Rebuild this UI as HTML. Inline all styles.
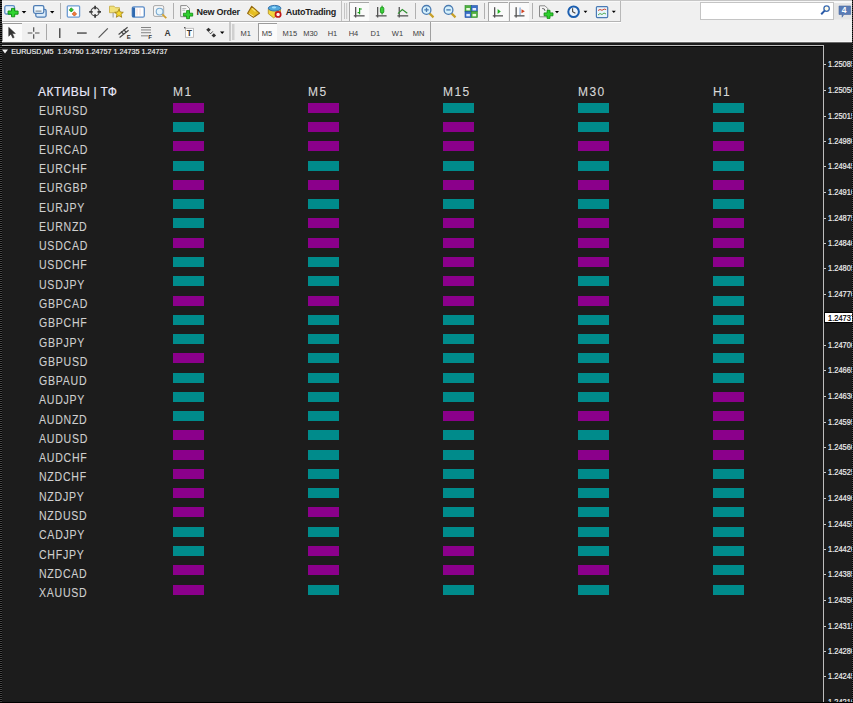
<!DOCTYPE html>
<html><head><meta charset="utf-8"><style>
*{margin:0;padding:0;box-sizing:border-box}
html,body{width:853px;height:703px;overflow:hidden;background:#1c1c1c;font-family:"Liberation Sans",sans-serif}
.abs{position:absolute}
#lstripe{position:absolute;left:0;top:0;width:2px;height:703px;background:repeating-linear-gradient(#000 0 1px,#454545 1px 2px)}
#rstripe{position:absolute;left:852px;top:0;width:1px;height:703px;background:repeating-linear-gradient(#000 0 1px,#454545 1px 2px)}
#tb{position:absolute;left:2px;top:0;width:850px;height:42px;background:#f0f0f0}
#tb1line{position:absolute;left:2px;top:0;width:850px;height:1px;background:#d4d4d4}
#tbsep{position:absolute;left:2px;top:21px;width:850px;height:1px;background:#a8a8a8}
#tbsep2{position:absolute;left:2px;top:22px;width:850px;height:1px;background:#fff}
#frameH{position:absolute;left:2px;top:45px;width:822px;height:1px;background:#bdbdbd}
#frameB{position:absolute;left:2px;top:46px;width:821px;height:1px;background:#000}
#frameV{position:absolute;left:823px;top:45px;width:1px;height:657px;background:#bdbdbd}
#bottom{position:absolute;left:0;top:702px;width:853px;height:1px;background:#000}
.title{position:absolute;left:11.2px;top:46.6px;font-size:7.2px;color:#f2f2f2;white-space:pre;letter-spacing:0;-webkit-text-stroke:0.15px #f2f2f2}
.tri{position:absolute;left:2.5px;top:50px;width:0;height:0;border-left:2.5px solid transparent;border-right:2.5px solid transparent;border-top:3.4px solid #f0f0f0}
.nm{position:absolute;left:39px;font-size:12px;letter-spacing:0.85px;transform:scaleX(0.88);transform-origin:0 0;color:#cfcfcf;line-height:14px;-webkit-text-stroke:0.1px #cfcfcf}
.th{position:absolute;top:85px;font-size:12px;letter-spacing:1.4px;color:#d8d8d8;line-height:14px;-webkit-text-stroke:0.1px #d8d8d8}
.hdr{position:absolute;left:38px;top:85.3px;font-size:12px;letter-spacing:0.45px;word-spacing:-0.5px;transform:scaleX(1);transform-origin:0 0;color:#e8e8fa;line-height:14px;white-space:pre;-webkit-text-stroke:0.15px #e8e8fa}
.bar{position:absolute;width:31px;height:10px}
.m{background:#8b008b}
.t{background:#008b8b}
.tk{position:absolute;left:824px;width:2px;height:1px;background:#c8c8c8}
.pl{position:absolute;left:827.6px;font-size:8.5px;color:#ececec;line-height:10px;white-space:nowrap;-webkit-text-stroke:0.2px #ececec;transform:scaleX(0.88);transform-origin:0 0}
.cur{position:absolute;left:824px;top:312px;width:29px;height:11px;background:#fff;border:1px solid #000}
.curt{position:absolute;left:827.6px;top:312.7px;font-size:8.5px;color:#000;line-height:10px;white-space:nowrap;-webkit-text-stroke:0.2px #000;transform:scaleX(0.88);transform-origin:0 0}
</style></head><body>
<svg class="abs" style="left:0;top:0" width="853" height="44" viewBox="0 0 853 44" font-family="Liberation Sans, sans-serif">
<rect x="2" y="0" width="850" height="42" fill="#f0f0f0"/>
<rect x="2" y="0" width="850" height="1" fill="#c6c6c6"/>
<rect x="2" y="1" width="850" height="1" fill="#f8f8f8"/>
<rect x="2" y="21" width="619" height="1" fill="#b4b4b4"/>
<rect x="2" y="22" width="619" height="1" fill="#ffffff"/>
<rect x="2" y="41" width="850" height="1" fill="#f8f8f8"/>
<rect x="2" y="42" width="850" height="1" fill="#6a6a6a"/>
<!-- toolbar1 right end -->
<rect x="620" y="1" width="1" height="20" fill="#b8b8b8"/>
<!-- separators row1 -->
<rect x="60" y="3" width="1" height="16" fill="#b0b0b0"/>
<rect x="173" y="3" width="1" height="16" fill="#b0b0b0"/>
<rect x="341" y="1" width="1" height="20" fill="#c0c0c0"/>
<rect x="344" y="3" width="1" height="16" fill="#c4c4c4"/><rect x="346.2" y="3" width="1" height="16" fill="#c4c4c4"/>
<rect x="415" y="3" width="1" height="16" fill="#b0b0b0"/>
<rect x="484" y="3" width="1" height="16" fill="#b0b0b0"/>
<rect x="532" y="3" width="1" height="16" fill="#b0b0b0"/>
<!-- pressed buttons row1 -->
<g fill="#fafafa" stroke="none"><rect x="349" y="2" width="20" height="19"/><rect x="488" y="2" width="20" height="19"/><rect x="509" y="2" width="20" height="19"/></g>
<g fill="#a8a8a8"><rect x="349" y="2" width="20" height="1"/><rect x="349" y="2" width="1" height="19"/>
<rect x="488" y="2" width="20" height="1"/><rect x="488" y="2" width="1" height="19"/>
<rect x="509" y="2" width="20" height="1"/><rect x="509" y="2" width="1" height="19"/></g>

<!-- new chart -->
<rect x="4.8" y="5.7" width="9.7" height="8.3" rx="1.5" fill="#e4f2fc" stroke="#5d8cc4" stroke-width="1.3"/>
<path d="M11.5 8.4h3.2v2.6h3.4v3.2h-3.4v2.6h-3.2v-2.6h-3.4v-3.2h3.4z" fill="#30d430" stroke="#0a8a0a" stroke-width="0.9"/>
<path d="M21.7 11h4.6l-2.3 2.4z" fill="#000"/>
<!-- profiles -->
<rect x="35.8" y="9.3" width="10.3" height="7.8" rx="1.5" fill="#dcecfa" stroke="#4d7cb4" stroke-width="1.3"/>
<rect x="33.6" y="5.6" width="10.2" height="7.7" rx="1.5" fill="#eef8ff" stroke="#4d7cb4" stroke-width="1.3"/>
<rect x="35.5" y="10.6" width="6" height="1" fill="#6a7a8a"/>
<path d="M50 11h4.4l-2.2 2.4z" fill="#000"/>
<!-- market watch -->
<rect x="67.3" y="5.8" width="12.3" height="11.3" rx="1" fill="#fbfdff" stroke="#6c9bd2" stroke-width="1.3"/>
<path d="M71.3 7.8l2.1 2.1-2.1 2.1-2.1-2.1z" fill="#2ec02e" stroke="#0c8c0c" stroke-width="0.7"/>
<path d="M74.4 11.7l2.2 2.2-2.2 2.2-2.2-2.2z" fill="#f07a3a" stroke="#c04a10" stroke-width="0.7"/>
<!-- data window -->
<circle cx="95.1" cy="11.8" r="4.1" fill="none" stroke="#4a4a4a" stroke-width="1.2"/>
<g stroke="#3c3c3c" stroke-linecap="butt"><path d="M95.1 5.8v3.5M95.1 14.3v3.5M89.2 11.8h3.5M97.5 11.8h3.5" stroke-width="1.8"/></g>
<!-- navigator -->
<path d="M109.5 6.2h4.5l1.5 1.5h4v5h-10z" fill="#f2e27a" stroke="#c8b04a" stroke-width="0.9"/>
<rect x="112.6" y="12.7" width="1" height="4.8" fill="#9a9a9a"/>
<path d="M119 9.2l1.3 2.8 3 .3-2.3 2 .7 3-2.7-1.6-2.7 1.6.7-3-2.3-2 3-.3z" fill="#f5d830" stroke="#9a7a10" stroke-width="0.8"/>
<!-- terminal -->
<rect x="132.3" y="6.8" width="12" height="10.4" rx="1.5" fill="#fff" stroke="#5a8ac6" stroke-width="1.3"/>
<rect x="132.3" y="7.5" width="2.8" height="9.6" fill="#2f69b0"/>
<path d="M137 8.5v7M140 8.5v7" stroke="#e8c0c0" stroke-width="0.6"/>
<!-- tester -->
<rect x="153.5" y="5.6" width="10.2" height="10.8" rx="1.5" fill="#f6f6f6" stroke="#a8a8a8" stroke-width="1"/>
<circle cx="159.6" cy="11.6" r="3.4" fill="#e4f4fc" stroke="#7aaad0" stroke-width="1.1"/>
<path d="M162.3 14.4l4 3.8" stroke="#d0a030" stroke-width="1.8"/>
<!-- new order -->
<path d="M180.7 5.6h6l2.8 2.8v8.3h-8.8z" fill="#f8f8f8" stroke="#8a8a8a" stroke-width="1"/>
<path d="M186.6 10.6h2.9v2.6h3.2v2.9h-3.2v2.6h-2.9v-2.6h-3.2v-2.9h3.2z" fill="#30d030" stroke="#0a8a0a" stroke-width="0.8"/>
<path d="M182.3 8.5h4M182.3 10.2h3" stroke="#9a9a9a" stroke-width="0.7"/>
<text x="196.6" y="14.6" font-size="9" font-weight="bold" fill="#1e1e1e" letter-spacing="-0.25">New Order</text>
<!-- metaeditor -->
<path d="M251.7 6.3l7.8 6.9-6.1 4.2-5.8-4z" fill="#e6be22" stroke="#946a12" stroke-width="1.1" stroke-linejoin="round"/>
<path d="M249.3 13.6l4.3 2.6" stroke="#fbe49a" stroke-width="1"/>
<path d="M252 8.5l3.5 3" stroke="#f6e070" stroke-width="1.2"/>
<!-- autotrading -->
<path d="M268.3 9.3h12.2v4.6l-7 3.9-5.2-4.1z" fill="#f2d63c" stroke="#b08a20" stroke-width="0.8"/>
<ellipse cx="274.6" cy="8.2" rx="6.3" ry="2.8" fill="#52a8dc" stroke="#2a6aa8" stroke-width="0.9"/>
<ellipse cx="274" cy="7.6" rx="2.2" ry="1" fill="#9adcff"/>
<circle cx="278.1" cy="14.4" r="2.6" fill="#fff2ee" stroke="#c01818" stroke-width="1.7"/>
<text x="285.8" y="14.6" font-size="9" font-weight="bold" fill="#1e1e1e" letter-spacing="-0.25">AutoTrading</text>
<!-- bar chart -->
<g fill="#555"><rect x="355" y="7" width="1.3" height="10.5"/><rect x="353.8" y="15.2" width="10.8" height="1.3"/></g>
<path d="M359.6 14.2v-6.2M357.6 12.6h2M359.6 9h2.2" stroke="#20a020" stroke-width="1.2" fill="none"/>
<!-- candle -->
<g fill="#555"><rect x="377" y="7" width="1.3" height="10.5"/><rect x="375.8" y="15.2" width="10.8" height="1.3"/></g>
<path d="M382.1 5.6v9" stroke="#0a8a0a" stroke-width="0.9"/><rect x="380.4" y="7.2" width="3.4" height="5.8" rx="1.2" fill="#3ad03a" stroke="#0a8a0a" stroke-width="0.8"/>
<!-- line chart -->
<g fill="#555"><rect x="398.6" y="7" width="1.3" height="10.5"/><rect x="397.4" y="15.2" width="10.8" height="1.3"/></g>
<path d="M398 13.6l4.3-4 5 3.6" stroke="#309030" stroke-width="1.2" fill="none"/>
<!-- zoom in/out -->
<path d="M429.5 13.4l4 4" stroke="#c8a028" stroke-width="2.2"/>
<circle cx="426.5" cy="9.9" r="4.4" fill="#d4f0fc" stroke="#4a7ab0" stroke-width="1.3"/>
<path d="M424.3 9.9h4.4M426.5 7.7v4.4" stroke="#4a7ab0" stroke-width="1.3"/>
<path d="M451.5 13.4l4 4" stroke="#c8a028" stroke-width="2.2"/>
<circle cx="448.5" cy="9.9" r="4.4" fill="#d4f0fc" stroke="#4a7ab0" stroke-width="1.3"/>
<path d="M446.3 9.9h4.4" stroke="#4a7ab0" stroke-width="1.3"/>
<!-- tile -->
<rect x="465" y="5.6" width="6.2" height="5.9" fill="#50b040" stroke="#2a8a2a" stroke-width="0.6"/>
<rect x="471.2" y="5.6" width="6.2" height="5.9" fill="#3a70c8" stroke="#1a4aa0" stroke-width="0.6"/>
<rect x="465" y="11.5" width="6.2" height="6" fill="#3a70c8" stroke="#1a4aa0" stroke-width="0.6"/>
<rect x="471.2" y="11.5" width="6.2" height="6" fill="#50b040" stroke="#2a8a2a" stroke-width="0.6"/>
<g fill="#e8f8e0"><rect x="466.3" y="8" width="3.6" height="2.4"/><rect x="472.5" y="13.9" width="3.6" height="2.4"/></g>
<g fill="#e0ecff"><rect x="472.5" y="8" width="3.6" height="2.4"/><rect x="466.3" y="13.9" width="3.6" height="2.4"/></g>
<!-- auto scroll -->
<g fill="#555"><rect x="494" y="7.2" width="1.3" height="10.4"/><rect x="492.8" y="15.2" width="10.2" height="1.3"/></g>
<path d="M497.6 9l3.2 2.5-3.2 2.5z" fill="#22b022"/>
<!-- chart shift -->
<g fill="#555"><rect x="515.5" y="7.2" width="1.3" height="10.4"/><rect x="514.3" y="15.2" width="10.2" height="1.3"/></g>
<rect x="519.6" y="7.5" width="0.9" height="7.6" fill="#5a8ac6"/>
<path d="M521.5 9.2l3.4 2-3.4 2z" fill="#d04020"/>
<!-- indicators -->
<path d="M539.5 5.8h5.5l2.8 2.8v8.2h-8.3z" fill="#f4f4f4" stroke="#8a8a8a" stroke-width="1"/>
<path d="M542.2 8.5a2.5 2.5 0 0 1 2.8 2.5" stroke="#555" stroke-width="0.9" fill="none"/>
<path d="M547.1 10.3h2.9v2.6h3v2.9h-3v2.6h-2.9v-2.6h-3v-2.9h3z" fill="#30d030" stroke="#0a8a0a" stroke-width="0.8"/>
<path d="M555 11h4l-2 2.3z" fill="#000"/>
<!-- clock -->
<circle cx="573.6" cy="11.7" r="5.3" fill="#eef4fa" stroke="#1c5fb0" stroke-width="2"/>
<path d="M572.6 8.2v3.5l2.8 1.5" stroke="#444" stroke-width="1.1" fill="none"/>
<path d="M583.6 10.8h3.8l-1.9 2.3z" fill="#000"/>
<!-- templates -->
<rect x="596.4" y="6.6" width="11.3" height="11" rx="1" fill="#e8f4fc" stroke="#4a7ab4" stroke-width="1.2"/>
<path d="M598 10.5l2-1 2 .8 2.2-1.2 2 .5" stroke="#d04a30" stroke-width="1" fill="none"/>
<path d="M598 15l2-1.5 2 1 2-1.5 2 1" stroke="#40a040" stroke-width="0.9" fill="none"/>
<path d="M611.8 10.8h4l-2 2.3z" fill="#000"/>
<!-- search -->
<rect x="700.5" y="2.5" width="133" height="17" fill="#fff" stroke="#c4c4c4" stroke-width="1"/>
<circle cx="826.6" cy="8.6" r="2.7" fill="#fffbe8" stroke="#3a6ab0" stroke-width="1.3"/>
<path d="M824.7 10.6l-3.5 3.6" stroke="#2a5aa8" stroke-width="2"/>
<rect x="834" y="2.5" width="18" height="17" fill="#e6e6e6"/>
<rect x="834" y="2" width="18" height="1" fill="#f8f8f8"/>
<path d="M839 6h11.6v8.5h-6.8l-1.7 2.7v-2.7h-3.1z" fill="#5a7cb6" stroke="#4a68a0" stroke-width="0.6"/>
<text x="841.8" y="13.4" font-size="8.5" font-weight="bold" fill="#fff">4</text>

<!-- ======== row2 ======== -->
<rect x="2" y="23" width="20" height="18" fill="#fbfbfb"/>
<rect x="2" y="23" width="20" height="1" fill="#9c9c9c"/>
<rect x="2" y="23" width="1" height="18" fill="#9c9c9c"/>
<rect x="46" y="24" width="1" height="16" fill="#a8a8a8"/>
<!-- cursor -->
<path d="M8.7 27.3v9l2.2-2.1 1.9 3.9 1.4-.7-1.8-3.8 3 -.1z" fill="#333" stroke="#333" stroke-width="0.5"/>
<!-- crosshair -->
<g stroke="#505050" stroke-width="1.2"><path d="M33.7 27.3v4.5M33.7 34.2v4.5M27.7 33h4.7M35 33h4.5"/></g>
<!-- vline -->
<rect x="59" y="28.2" width="1.5" height="9.8" fill="#555"/>
<!-- hline -->
<rect x="77" y="32.3" width="9.7" height="1.5" fill="#555"/>
<!-- trendline -->
<path d="M98.6 37.6l9.2-9.2" stroke="#555" stroke-width="1.2"/>
<!-- channel -->
<g stroke="#444" stroke-width="1.1" fill="none"><path d="M118.6 34.5l9-7.2M119.6 37.5l9-7.2M121 31.5l3 3M123.5 29.5l3 3"/></g>
<text x="126.8" y="39.4" font-size="6" font-weight="bold" fill="#333">E</text>
<!-- fibo -->
<g fill="#777"><rect x="141" y="27" width="10" height="0.9"/><rect x="141" y="29.5" width="10" height="0.9"/><rect x="141" y="32.3" width="10" height="0.9"/><rect x="141" y="35.4" width="7" height="0.9"/></g>
<text x="148.3" y="39.2" font-size="6" font-weight="bold" fill="#333">F</text>
<!-- text A -->
<text x="164.6" y="36.3" font-size="8.5" font-weight="bold" fill="#3a3a3a">A</text>
<!-- text label T -->
<rect x="185.5" y="28.3" width="8" height="9" fill="#fff" stroke="#b0b0b0" stroke-width="0.8"/>
<circle cx="184.8" cy="27.8" r="0.8" fill="#333"/>
<text x="186.8" y="36.3" font-size="8.5" font-weight="bold" fill="#333">T</text>
<!-- arrows -->
<path d="M208.5 27.7l2.3 2.1-2.3 2.1-2.3-2.1zM213.8 33.2l2.3 2.2-2.3 2.2-2.3-2.2z" fill="#333"/>
<path d="M209.2 32.4l1.4 1.4 2.2-2.4" stroke="#333" stroke-width="0.9" fill="none"/>
<path d="M220 31.6h4.4l-2.2 2.4z" fill="#000"/>
<!-- end toolbar2a -->
<rect x="229.5" y="22" width="1" height="19" fill="#a0a0a0"/>
<rect x="232" y="24" width="2.5" height="16" fill="#d0d0d0"/>
<!-- timeframes -->
<rect x="258" y="23" width="19" height="18" fill="#fbfbfb"/>
<rect x="258" y="23" width="19" height="1" fill="#9c9c9c"/>
<rect x="258" y="23" width="1" height="18" fill="#9c9c9c"/>
<g font-size="7.5" fill="#3c3c3c">
<text x="240.5" y="35.8">M1</text>
<text x="261.8" y="35.8">M5</text>
<text x="282.5" y="35.8">M15</text>
<text x="303.2" y="35.8">M30</text>
<text x="327.7" y="35.8">H1</text>
<text x="348.7" y="35.8">H4</text>
<text x="370.5" y="35.8">D1</text>
<text x="391.8" y="35.8">W1</text>
<text x="412.8" y="35.8">MN</text>
</g>
<rect x="430" y="22" width="1" height="19" fill="#a0a0a0"/>
</svg>

<div id="frameH"></div><div id="frameB"></div><div id="frameV"></div>
<svg class="abs" style="left:0;top:0" width="12" height="60"><path d="M2 49.6h6l-3 3.9z" fill="#f2f2f2"/></svg><div class="title">EURUSD,M5  1.24750 1.24757 1.24735 1.24737</div>
<div class="hdr">АКТИВЫ | ТФ</div>
<div class="nm" style="top:104.30px">EURUSD</div><div class="bar m" style="left:173px;top:102.80px"></div><div class="bar m" style="left:308px;top:102.80px"></div><div class="bar t" style="left:443px;top:102.80px"></div><div class="bar t" style="left:578px;top:102.80px"></div><div class="bar t" style="left:713px;top:102.80px"></div><div class="nm" style="top:123.57px">EURAUD</div><div class="bar t" style="left:173px;top:122.07px"></div><div class="bar m" style="left:308px;top:122.07px"></div><div class="bar m" style="left:443px;top:122.07px"></div><div class="bar t" style="left:578px;top:122.07px"></div><div class="bar t" style="left:713px;top:122.07px"></div><div class="nm" style="top:142.84px">EURCAD</div><div class="bar m" style="left:173px;top:141.34px"></div><div class="bar m" style="left:308px;top:141.34px"></div><div class="bar m" style="left:443px;top:141.34px"></div><div class="bar m" style="left:578px;top:141.34px"></div><div class="bar m" style="left:713px;top:141.34px"></div><div class="nm" style="top:162.11px">EURCHF</div><div class="bar t" style="left:173px;top:160.61px"></div><div class="bar t" style="left:308px;top:160.61px"></div><div class="bar t" style="left:443px;top:160.61px"></div><div class="bar t" style="left:578px;top:160.61px"></div><div class="bar t" style="left:713px;top:160.61px"></div><div class="nm" style="top:181.38px">EURGBP</div><div class="bar m" style="left:173px;top:179.88px"></div><div class="bar m" style="left:308px;top:179.88px"></div><div class="bar m" style="left:443px;top:179.88px"></div><div class="bar m" style="left:578px;top:179.88px"></div><div class="bar m" style="left:713px;top:179.88px"></div><div class="nm" style="top:200.65px">EURJPY</div><div class="bar t" style="left:173px;top:199.15px"></div><div class="bar t" style="left:308px;top:199.15px"></div><div class="bar t" style="left:443px;top:199.15px"></div><div class="bar t" style="left:578px;top:199.15px"></div><div class="bar t" style="left:713px;top:199.15px"></div><div class="nm" style="top:219.92px">EURNZD</div><div class="bar t" style="left:173px;top:218.42px"></div><div class="bar m" style="left:308px;top:218.42px"></div><div class="bar m" style="left:443px;top:218.42px"></div><div class="bar m" style="left:578px;top:218.42px"></div><div class="bar m" style="left:713px;top:218.42px"></div><div class="nm" style="top:239.19px">USDCAD</div><div class="bar m" style="left:173px;top:237.69px"></div><div class="bar m" style="left:308px;top:237.69px"></div><div class="bar m" style="left:443px;top:237.69px"></div><div class="bar m" style="left:578px;top:237.69px"></div><div class="bar m" style="left:713px;top:237.69px"></div><div class="nm" style="top:258.46px">USDCHF</div><div class="bar t" style="left:173px;top:256.96px"></div><div class="bar t" style="left:308px;top:256.96px"></div><div class="bar m" style="left:443px;top:256.96px"></div><div class="bar m" style="left:578px;top:256.96px"></div><div class="bar m" style="left:713px;top:256.96px"></div><div class="nm" style="top:277.73px">USDJPY</div><div class="bar t" style="left:173px;top:276.23px"></div><div class="bar t" style="left:308px;top:276.23px"></div><div class="bar m" style="left:443px;top:276.23px"></div><div class="bar t" style="left:578px;top:276.23px"></div><div class="bar t" style="left:713px;top:276.23px"></div><div class="nm" style="top:297.00px">GBPCAD</div><div class="bar m" style="left:173px;top:295.50px"></div><div class="bar m" style="left:308px;top:295.50px"></div><div class="bar m" style="left:443px;top:295.50px"></div><div class="bar m" style="left:578px;top:295.50px"></div><div class="bar t" style="left:713px;top:295.50px"></div><div class="nm" style="top:316.27px">GBPCHF</div><div class="bar t" style="left:173px;top:314.77px"></div><div class="bar t" style="left:308px;top:314.77px"></div><div class="bar t" style="left:443px;top:314.77px"></div><div class="bar t" style="left:578px;top:314.77px"></div><div class="bar t" style="left:713px;top:314.77px"></div><div class="nm" style="top:335.54px">GBPJPY</div><div class="bar t" style="left:173px;top:334.04px"></div><div class="bar t" style="left:308px;top:334.04px"></div><div class="bar t" style="left:443px;top:334.04px"></div><div class="bar t" style="left:578px;top:334.04px"></div><div class="bar t" style="left:713px;top:334.04px"></div><div class="nm" style="top:354.81px">GBPUSD</div><div class="bar m" style="left:173px;top:353.31px"></div><div class="bar t" style="left:308px;top:353.31px"></div><div class="bar t" style="left:443px;top:353.31px"></div><div class="bar t" style="left:578px;top:353.31px"></div><div class="bar t" style="left:713px;top:353.31px"></div><div class="nm" style="top:374.08px">GBPAUD</div><div class="bar t" style="left:173px;top:372.58px"></div><div class="bar t" style="left:308px;top:372.58px"></div><div class="bar t" style="left:443px;top:372.58px"></div><div class="bar t" style="left:578px;top:372.58px"></div><div class="bar t" style="left:713px;top:372.58px"></div><div class="nm" style="top:393.35px">AUDJPY</div><div class="bar t" style="left:173px;top:391.85px"></div><div class="bar t" style="left:308px;top:391.85px"></div><div class="bar t" style="left:443px;top:391.85px"></div><div class="bar t" style="left:578px;top:391.85px"></div><div class="bar m" style="left:713px;top:391.85px"></div><div class="nm" style="top:412.62px">AUDNZD</div><div class="bar t" style="left:173px;top:411.12px"></div><div class="bar t" style="left:308px;top:411.12px"></div><div class="bar m" style="left:443px;top:411.12px"></div><div class="bar m" style="left:578px;top:411.12px"></div><div class="bar m" style="left:713px;top:411.12px"></div><div class="nm" style="top:431.89px">AUDUSD</div><div class="bar m" style="left:173px;top:430.39px"></div><div class="bar t" style="left:308px;top:430.39px"></div><div class="bar t" style="left:443px;top:430.39px"></div><div class="bar t" style="left:578px;top:430.39px"></div><div class="bar m" style="left:713px;top:430.39px"></div><div class="nm" style="top:451.16px">AUDCHF</div><div class="bar m" style="left:173px;top:449.66px"></div><div class="bar t" style="left:308px;top:449.66px"></div><div class="bar t" style="left:443px;top:449.66px"></div><div class="bar m" style="left:578px;top:449.66px"></div><div class="bar m" style="left:713px;top:449.66px"></div><div class="nm" style="top:470.43px">NZDCHF</div><div class="bar m" style="left:173px;top:468.93px"></div><div class="bar t" style="left:308px;top:468.93px"></div><div class="bar t" style="left:443px;top:468.93px"></div><div class="bar t" style="left:578px;top:468.93px"></div><div class="bar t" style="left:713px;top:468.93px"></div><div class="nm" style="top:489.70px">NZDJPY</div><div class="bar m" style="left:173px;top:488.20px"></div><div class="bar t" style="left:308px;top:488.20px"></div><div class="bar t" style="left:443px;top:488.20px"></div><div class="bar t" style="left:578px;top:488.20px"></div><div class="bar t" style="left:713px;top:488.20px"></div><div class="nm" style="top:508.97px">NZDUSD</div><div class="bar m" style="left:173px;top:507.47px"></div><div class="bar m" style="left:308px;top:507.47px"></div><div class="bar t" style="left:443px;top:507.47px"></div><div class="bar t" style="left:578px;top:507.47px"></div><div class="bar t" style="left:713px;top:507.47px"></div><div class="nm" style="top:528.24px">CADJPY</div><div class="bar t" style="left:173px;top:526.74px"></div><div class="bar t" style="left:308px;top:526.74px"></div><div class="bar t" style="left:443px;top:526.74px"></div><div class="bar t" style="left:578px;top:526.74px"></div><div class="bar t" style="left:713px;top:526.74px"></div><div class="nm" style="top:547.51px">CHFJPY</div><div class="bar t" style="left:173px;top:546.01px"></div><div class="bar m" style="left:308px;top:546.01px"></div><div class="bar m" style="left:443px;top:546.01px"></div><div class="bar t" style="left:578px;top:546.01px"></div><div class="bar t" style="left:713px;top:546.01px"></div><div class="nm" style="top:566.78px">NZDCAD</div><div class="bar m" style="left:173px;top:565.28px"></div><div class="bar m" style="left:308px;top:565.28px"></div><div class="bar m" style="left:443px;top:565.28px"></div><div class="bar m" style="left:578px;top:565.28px"></div><div class="bar t" style="left:713px;top:565.28px"></div><div class="nm" style="top:586.05px">XAUUSD</div><div class="bar m" style="left:173px;top:584.55px"></div><div class="bar t" style="left:308px;top:584.55px"></div><div class="bar t" style="left:443px;top:584.55px"></div><div class="bar t" style="left:578px;top:584.55px"></div><div class="bar t" style="left:713px;top:584.55px"></div><div class="th" style="left:173px">M1</div><div class="th" style="left:308px">M5</div><div class="th" style="left:443px">M15</div><div class="th" style="left:578px">M30</div><div class="th" style="left:713px">H1</div>
<div class="tk" style="top:64px"></div><div class="pl" style="top:59px">1.25085</div><div class="tk" style="top:90px"></div><div class="pl" style="top:85px">1.25050</div><div class="tk" style="top:116px"></div><div class="pl" style="top:111px">1.25015</div><div class="tk" style="top:141px"></div><div class="pl" style="top:136px">1.24980</div><div class="tk" style="top:166px"></div><div class="pl" style="top:161px">1.24945</div><div class="tk" style="top:192px"></div><div class="pl" style="top:187px">1.24910</div><div class="tk" style="top:218px"></div><div class="pl" style="top:213px">1.24875</div><div class="tk" style="top:243px"></div><div class="pl" style="top:238px">1.24840</div><div class="tk" style="top:268px"></div><div class="pl" style="top:263px">1.24805</div><div class="tk" style="top:294px"></div><div class="pl" style="top:289px">1.24770</div><div class="tk" style="top:320px"></div><div class="pl" style="top:315px">1.24735</div><div class="tk" style="top:345px"></div><div class="pl" style="top:340px">1.24700</div><div class="tk" style="top:370px"></div><div class="pl" style="top:365px">1.24665</div><div class="tk" style="top:396px"></div><div class="pl" style="top:391px">1.24630</div><div class="tk" style="top:422px"></div><div class="pl" style="top:417px">1.24595</div><div class="tk" style="top:447px"></div><div class="pl" style="top:442px">1.24560</div><div class="tk" style="top:472px"></div><div class="pl" style="top:467px">1.24525</div><div class="tk" style="top:498px"></div><div class="pl" style="top:493px">1.24490</div><div class="tk" style="top:524px"></div><div class="pl" style="top:519px">1.24455</div><div class="tk" style="top:549px"></div><div class="pl" style="top:544px">1.24420</div><div class="tk" style="top:574px"></div><div class="pl" style="top:569px">1.24385</div><div class="tk" style="top:600px"></div><div class="pl" style="top:595px">1.24350</div><div class="tk" style="top:626px"></div><div class="pl" style="top:621px">1.24315</div><div class="tk" style="top:651px"></div><div class="pl" style="top:646px">1.24280</div><div class="tk" style="top:676px"></div><div class="pl" style="top:671px">1.24245</div><div class="tk" style="top:702px"></div><div class="pl" style="top:697px">1.24210</div>
<div class="cur"></div><div class="curt">1.24737</div>
<div id="bottom"></div>
<div id="lstripe"></div><div id="rstripe"></div>
</body></html>
